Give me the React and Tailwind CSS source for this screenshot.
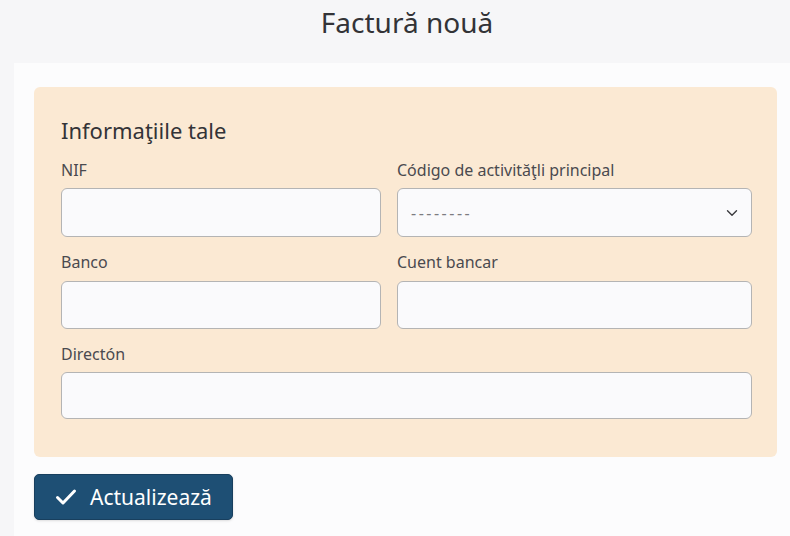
import React from "react";

function Field({ label, children, mb = "mb-[7px]" }) {
  return (
    <div className="flex flex-col">
      <label className={`text-[16px] leading-[22px] text-[#4a4a4f] ${mb}`}>{label}</label>
      {children}
    </div>
  );
}

export default function App() {
  return (
    <div
      className="w-[790px] h-[536px] overflow-hidden bg-[#f6f6f8] text-[#2b2b2e]"
      style={{ fontFamily: '"Noto Sans", "Open Sans", sans-serif' }}
    >
      <h1 className="pl-[24px] pt-[3px] h-[63px] text-center text-[28px] leading-[38px] text-[#333337]">
        Factură nouă
      </h1>
      <div className="ml-[14px] bg-[#fcfcfd] pt-[24px] pl-[20px] pr-[13px] h-[473px]">
        <div className="rounded-[6px] bg-[#fbe9d3] pt-[28px] pl-[27px] pr-[25px] pb-[38px]">
          <h2 className="text-[22px] leading-[30px] text-[#333337] mb-[14px]">Informaţiile tale</h2>
          <div className="grid grid-cols-[320px_1fr] gap-x-[16px] gap-y-[14px]">
            <Field label="NIF">
              <input className="h-[49px] rounded-[6px] border border-[#b4b4b4] bg-[#fafafc] px-3 outline-none" />
            </Field>
            <Field label="Código de activităţli principal">
              <div className="h-[49px] rounded-[6px] border border-[#b4b4b4] bg-[#fafafc] pl-[13px] pr-[13px] flex items-center justify-between">
                <span className="text-[16px] text-[#7c7c80] tracking-[2.5px]">--------</span>
                <svg width="12" height="8" viewBox="0 0 12 8" fill="none">
                  <path d="M1.5 1.75L6 6.25L10.5 1.75" stroke="#3a3a3e" strokeWidth="1.4" strokeLinecap="round" strokeLinejoin="round" />
                </svg>
              </div>
            </Field>
            <Field label="Banco" mb="mb-[8px]">
              <input className="h-[48px] rounded-[6px] border border-[#b4b4b4] bg-[#fafafc] px-3 outline-none" />
            </Field>
            <Field label="Cuent bancar" mb="mb-[8px]">
              <input className="h-[48px] rounded-[6px] border border-[#b4b4b4] bg-[#fafafc] px-3 outline-none" />
            </Field>
            <div className="col-span-2">
              <Field label="Directón">
                <input className="w-full h-[47px] rounded-[6px] border border-[#b4b4b4] bg-[#fafafc] px-3 outline-none" />
              </Field>
            </div>
          </div>
        </div>
        <button className="mt-[17px] h-[46px] w-[199px] rounded-[5px] bg-[#1e4f74] border border-[#183f5e] text-white flex items-center pl-[20px] gap-[13px] shadow-sm">
          <svg width="22" height="18" viewBox="0 0 22 18" fill="none">
            <path d="M2.5 9.5L8 15L19.5 3" stroke="white" strokeWidth="3" strokeLinecap="round" strokeLinejoin="round" />
          </svg>
          <span className="text-[21px] leading-[26px]">Actualizează</span>
        </button>
      </div>
    </div>
  );
}
